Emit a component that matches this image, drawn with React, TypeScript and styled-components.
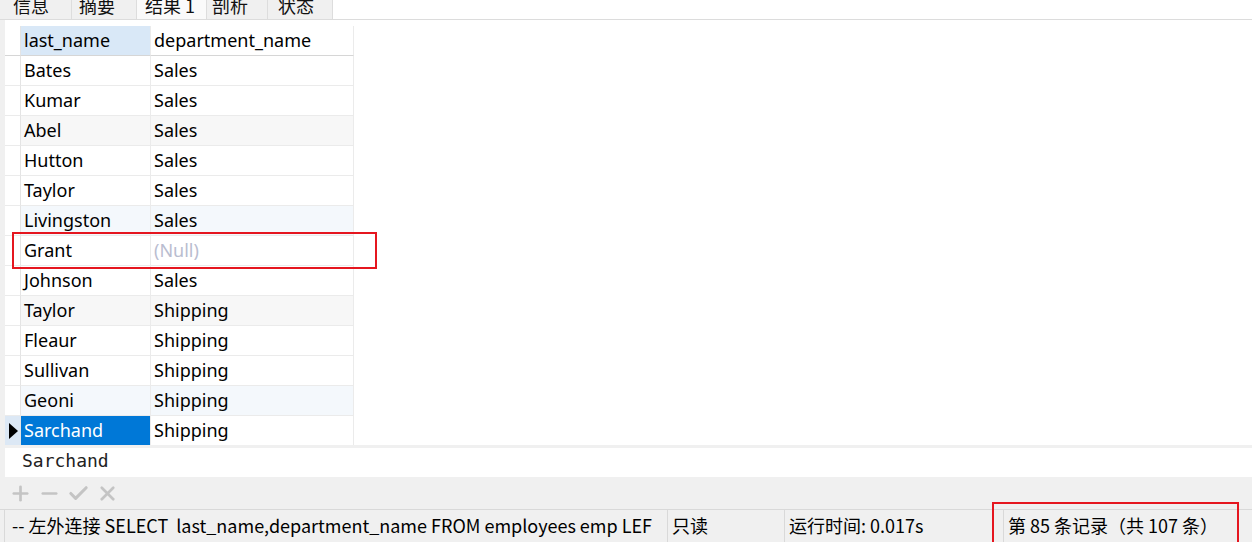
import React from "react";
import styled, { createGlobalStyle } from "styled-components";
import { Plus, Minus, Check, X } from "lucide-react";

const Global = createGlobalStyle`
  html, body { margin: 0; padding: 0; background: #f0f0f0; }
  body { font-family: "Noto Sans", "Noto Sans CJK SC", sans-serif; }
  * { box-sizing: border-box; }
`;

const Root = styled.div`
  position: relative;
  width: 1252px;
  height: 542px;
  overflow: hidden;
  display: flex;
  flex-direction: column;
  background: #f0f0f0;
  color: #000;
`;

const TabBar = styled.div`
  height: 20px;
  display: flex;
  background: #fff;
  border-bottom: 1px solid #dcdcdc;
  overflow: hidden;
`;

const Tab = styled.div<{ $w: number; $pad: number; $active?: boolean }>`
  width: ${(p) => p.$w}px;
  height: 19px;
  flex: none;
  background: ${(p) => (p.$active ? "#fafafa" : "#f0f0f0")};
  border-right: 1px solid #dddddd;
  font-family: "Noto Sans CJK SC", sans-serif;
  font-size: 18px;
  line-height: 18px;
  padding-left: ${(p) => p.$pad}px;
  color: #111;
  white-space: nowrap;
  overflow: hidden;
  & > span { display: block; margin-top: -4px; }
`;

const Body = styled.div`
  display: flex;
  flex-direction: column;
  padding-left: 5px;
`;

const GridArea = styled.div`
  height: 425px;
  background: #fff;
  padding-top: 6px;
`;

const Grid = styled.div`
  display: grid;
  grid-template-columns: 16px 130px 203px;
  width: 349px;
`;

const Cell = styled.div<{ $bg?: string; $head?: boolean; $sel?: boolean }>`
  height: 30px;
  line-height: 29px;
  font-size: 18px;
  padding-left: 3px;
  white-space: nowrap;
  overflow: hidden;
  background: ${(p) => (p.$sel ? "#0078d7" : p.$bg || "#fff")};
  color: ${(p) => (p.$sel ? "#fff" : "#000")};
  border-right: 1px solid #ebebeb;
  border-bottom: 1px solid ${(p) => (p.$head ? "#d6d6d6" : "#ebebeb")};
`;

const NullText = styled.span`
  color: #b9bdd0;
`;

const Gutter = styled.div<{ $cur?: boolean; $head?: boolean }>`
  height: 30px;
  background: ${(p) => (p.$cur ? "#dce8f5" : "#fff")};
  border-right: 1px solid #e4e4e4;
  border-bottom: 1px solid ${(p) => (p.$head ? "#d6d6d6" : "#ebebeb")};
  display: flex;
  align-items: center;
  padding-left: 4px;
`;

const Arrow = styled.div`
  width: 0;
  height: 0;
  border-top: 8px solid transparent;
  border-bottom: 8px solid transparent;
  border-left: 9px solid #000;
`;

const Divider = styled.div`
  height: 3px;
  background: #f0f0f0;
`;

const Editor = styled.div`
  height: 29px;
  background: #fff;
  padding-left: 17px;
  font-family: "DejaVu Sans Mono", monospace;
  font-size: 18px;
  line-height: 26px;
  color: #222;
`;

const Toolbar = styled.div`
  height: 32px;
  display: flex;
  align-items: center;
  gap: 6px;
  padding-left: 9px;
  color: #c4c4c4;
`;

const ToolIcon = styled.span`
  width: 23px;
  height: 23px;
  display: flex;
  align-items: center;
  justify-content: center;
`;

const StatusBar = styled.div`
  height: 33px;
  border-top: 1px solid #d9d9d9;
  display: flex;
  padding-left: 4px;
  font-family: "Noto Sans CJK SC", sans-serif;
  font-size: 18px;
  line-height: 30px;
`;

const StatusCell = styled.div<{ $w?: number; $pad?: number }>`
  ${(p) => (p.$w ? `width: ${p.$w}px;` : "flex: 1;")}
  flex-shrink: 0;
  border-left: 1px solid #d9d9d9;
  padding-left: ${(p) => p.$pad ?? 4}px;
  white-space: nowrap;
  overflow: hidden;
`;

const Mark = styled.div<{ $x: number; $y: number; $w: number; $h: number }>`
  position: absolute;
  left: ${(p) => p.$x}px;
  top: ${(p) => p.$y}px;
  width: ${(p) => p.$w}px;
  height: ${(p) => p.$h}px;
  border: 2px solid #e5161f;
  pointer-events: none;
`;

type Row = { a: string; b: string | null; bg?: string };

const rows: Row[] = [
  { a: "Bates", b: "Sales" },
  { a: "Kumar", b: "Sales" },
  { a: "Abel", b: "Sales", bg: "#f7f7f7" },
  { a: "Hutton", b: "Sales" },
  { a: "Taylor", b: "Sales" },
  { a: "Livingston", b: "Sales", bg: "#f4f8fc" },
  { a: "Grant", b: null },
  { a: "Johnson", b: "Sales" },
  { a: "Taylor", b: "Shipping", bg: "#f7f7f7" },
  { a: "Fleaur", b: "Shipping" },
  { a: "Sullivan", b: "Shipping" },
  { a: "Geoni", b: "Shipping", bg: "#f4f8fc" },
];

export default function App() {
  return (
    <Root>
      <Global />
      <TabBar>
        <Tab $w={72} $pad={13}><span>信息</span></Tab>
        <Tab $w={65} $pad={7}><span>摘要</span></Tab>
        <Tab $w={70} $pad={8} $active><span>结果 1</span></Tab>
        <Tab $w={61} $pad={5}><span>剖析</span></Tab>
        <Tab $w={65} $pad={10}><span>状态</span></Tab>
      </TabBar>
      <Body>
        <GridArea>
          <Grid>
            <Gutter $head />
            <Cell $head $bg="#d9e8f7">last_name</Cell>
            <Cell $head>department_name</Cell>
            {rows.map((r, i) => (
              <React.Fragment key={i}>
                <Gutter />
                <Cell $bg={r.bg}>{r.a}</Cell>
                <Cell $bg={r.bg}>{r.b === null ? <NullText>(Null)</NullText> : r.b}</Cell>
              </React.Fragment>
            ))}
            <Gutter $cur>
              <Arrow />
            </Gutter>
            <Cell $sel>Sarchand</Cell>
            <Cell>Shipping</Cell>
          </Grid>
        </GridArea>
        <Divider />
        <Editor>Sarchand</Editor>
      </Body>
      <Toolbar>
        <ToolIcon><Plus size={23} strokeWidth={2.8} /></ToolIcon>
        <ToolIcon><Minus size={23} strokeWidth={2.8} /></ToolIcon>
        <ToolIcon><Check size={23} strokeWidth={3.2} /></ToolIcon>
        <ToolIcon><X size={23} strokeWidth={2.8} /></ToolIcon>
      </Toolbar>
      <StatusBar>
        <StatusCell $w={663} $pad={7}>-- 左外连接 SELECT&nbsp; last_name,department_name FROM employees emp LEF</StatusCell>
        <StatusCell $w={117}>只读</StatusCell>
        <StatusCell $w={219}>运行时间: 0.017s</StatusCell>
        <StatusCell>第 85 条记录（共 107 条）</StatusCell>
      </StatusBar>
      <Mark $x={12} $y={232} $w={365} $h={37} />
      <Mark $x={992} $y={502} $w={247} $h={50} />
    </Root>
  );
}
